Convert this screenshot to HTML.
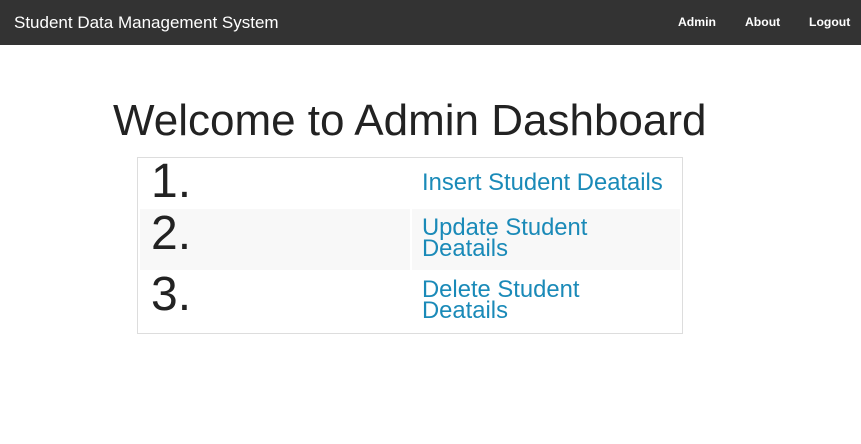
<!DOCTYPE html>
<html><head><style>
body{margin:0;width:861px;height:444px;background:#fff;font-family:"Liberation Sans",Arial,sans-serif;position:relative;overflow:hidden}
.nav{position:absolute;left:0;top:0;width:861px;height:45px;background:#333}
.brand{position:absolute;left:14px;top:13px;color:#fff;font-size:17px}
.nl{position:absolute;top:15px;color:#fff;font-size:12.2px;font-weight:bold}
h1{position:absolute;left:113px;top:96px;margin:0;font-weight:normal;font-size:44px;color:#222;white-space:nowrap}
.tbl{position:absolute;left:137px;top:157px;width:544px;height:175px;border:1px solid #ddd}
.row2{position:absolute;left:2px;top:51px;width:540px;height:61px;background:#f8f8f8}
.sep{position:absolute;left:272px;top:51px;width:2px;height:61px;background:#fff}
.num{position:absolute;left:13px;font-size:48px;color:#222;line-height:48px}
.lk{position:absolute;left:284px;font-size:23.8px;color:#1a8ab8;line-height:21px}
</style></head><body>
<div class="nav">
<div class="brand">Student Data Management System</div>
<div class="nl" style="left:678px">Admin</div>
<div class="nl" style="left:745px">About</div>
<div class="nl" style="left:809px">Logout</div>
</div>
<h1>Welcome to Admin Dashboard</h1>
<div class="tbl">
<div class="row2"></div><div class="sep"></div>
<div class="num" style="top:0px">1.</div>
<div class="num" style="top:52px">2.</div>
<div class="num" style="top:113px">3.</div>
<div class="lk" style="top:14px">Insert Student Deatails</div>
<div class="lk" style="top:59px">Update Student<br>Deatails</div>
<div class="lk" style="top:121px">Delete Student<br>Deatails</div>
</div>
</body></html>
